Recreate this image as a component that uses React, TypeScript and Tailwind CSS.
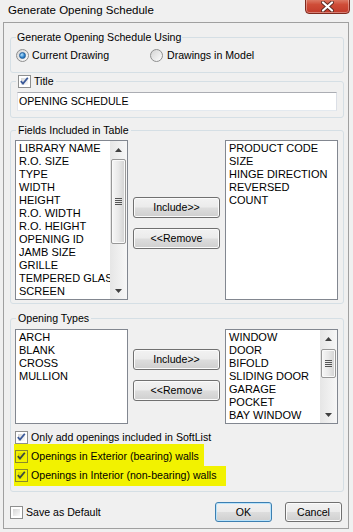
import React from "react";

function Check({ checked, hl }: { checked?: boolean; hl?: boolean }) {
  return (
    <span
      className={`relative flex w-[13px] h-[13px] shrink-0 border ${hl ? "border-[#8a8a2a] bg-[#f2f200]" : "border-[#8e8f8f] bg-white"} p-[2px]`}
    >
      <span
        className={`block w-full h-full ${hl ? "bg-linear-to-br from-[#d8d800] to-[#f2f200]" : "bg-linear-to-br from-[#d6d6d6] to-[#fbfbfb]"}`}
      />
      {checked && (
        <svg className="absolute left-0 top-0" width="11" height="11" viewBox="0 0 11 11">
          <polyline points="1.8,5.2 4,7.6 8.8,1.8" fill="none" stroke={hl ? "#3a4a40" : "#3b5a9a"} strokeWidth="1.8" />
        </svg>
      )}
    </span>
  );
}

function Radio({ on }: { on?: boolean }) {
  return (
    <span className="flex items-center justify-center w-[13px] h-[13px] shrink-0 rounded-full border border-[#8e8f8f] bg-linear-to-br from-[#d4d4d4] to-[#fdfdfd]">
      {on && (
        <span className="block w-[7px] h-[7px] rounded-full bg-[radial-gradient(circle_at_35%_35%,#b8e4ff,#2a7fc8_60%,#1a5a98)] border border-[#23609c]" />
      )}
    </span>
  );
}

function Btn({ children, cls, def }: { children: React.ReactNode; cls: string; def?: boolean }) {
  return (
    <div
      className={`flex shrink-0 items-center justify-center rounded-[3px] border ${def ? "border-[#3c7fb1] shadow-[inset_0_0_0_1px_#b9e3fb]" : "border-[#707070] shadow-[inset_0_0_0_1px_#fbfbfb]"} bg-[linear-gradient(#f2f2f2_0%,#ebebeb_48%,#dddddd_52%,#cfcfcf_100%)] ${cls}`}
    >
      {children}
    </div>
  );
}

function ScrollBar({ thumbTop, thumbH }: { thumbTop: number; thumbH: number }) {
  return (
    <div className="relative w-[17px] h-full shrink-0 bg-linear-to-r from-[#e6e6e6] to-[#f7f7f7]">
      <div className="absolute left-0 top-0 w-[17px] h-[17px] flex items-center justify-center">
        <svg width="7" height="4" viewBox="0 0 7 4">
          <polygon points="3.5,0 7,4 0,4" fill="#404040" />
        </svg>
      </div>
      <div
        className="absolute left-[1px] w-[15px] rounded-[2px] border border-[#979797] bg-linear-to-r from-[#f7f7f7] via-[#e8e8e8] to-[#d2d2d2] flex items-center justify-center shadow-[inset_0_0_0_1px_#f9f9f9]"
        style={{ top: thumbTop, height: thumbH }}
      >
        <svg width="7" height="7" viewBox="0 0 7 7">
          <line x1="0" y1="0.5" x2="7" y2="0.5" stroke="#555" />
          <line x1="0" y1="2.5" x2="7" y2="2.5" stroke="#555" />
          <line x1="0" y1="4.5" x2="7" y2="4.5" stroke="#555" />
          <line x1="0" y1="6.5" x2="7" y2="6.5" stroke="#555" />
        </svg>
      </div>
      <div className="absolute left-0 bottom-0 w-[17px] h-[17px] flex items-center justify-center">
        <svg width="7" height="4" viewBox="0 0 7 4">
          <polygon points="0,0 7,0 3.5,4" fill="#404040" />
        </svg>
      </div>
    </div>
  );
}

function ListBox({
  items,
  cls,
  scroll,
}: {
  items: string[];
  cls: string;
  scroll?: { top: number; h: number };
}) {
  return (
    <div className={`flex shrink-0 bg-white border border-[#828790] overflow-hidden ${cls}`}>
      <div className="flex-1 flex flex-col pl-[3px] pt-[1px] overflow-hidden whitespace-nowrap">
        {items.map((t) => (
          <div key={t} className="h-[13px] leading-[13px] text-[11px]">
            {t}
          </div>
        ))}
      </div>
      {scroll && <ScrollBar thumbTop={scroll.top} thumbH={scroll.h} />}
    </div>
  );
}

export default function App() {
  const fields = [
    "LIBRARY NAME",
    "R.O. SIZE",
    "TYPE",
    "WIDTH",
    "HEIGHT",
    "R.O. WIDTH",
    "R.O. HEIGHT",
    "OPENING ID",
    "JAMB SIZE",
    "GRILLE",
    "TEMPERED GLASS",
    "SCREEN",
  ];
  const chosen = ["PRODUCT CODE", "SIZE", "HINGE DIRECTION", "REVERSED", "COUNT"];
  const types = ["ARCH", "BLANK", "CROSS", "MULLION"];
  const chosenTypes = ["WINDOW", "DOOR", "BIFOLD", "SLIDING DOOR", "GARAGE", "POCKET", "BAY WINDOW"];

  return (
    <div className="w-[353px] h-[532px] bg-[#f0f0f0] flex flex-col font-['Liberation_Sans',Arial,sans-serif] text-[10.6px] leading-[13px] text-black overflow-hidden whitespace-nowrap">
      {/* title bar */}
      <div className="h-[22px] flex items-start shrink-0">
        <span className="ml-[8px] mt-[4px] text-[11.5px] leading-[13px]">Generate Opening Schedule</span>
        <div className="ml-auto mr-[3px] mt-[-5px] w-[45px] h-[19px] shrink-0 rounded-b-[4px] border border-[#7e2a1e] bg-linear-to-b from-[#e59a88] via-[#cf4d38] to-[#c23a2a] shadow-[inset_0_0_0_1px_rgba(255,255,255,0.35)] flex items-center justify-center">
          <svg width="13" height="11" viewBox="0 0 13 11" className="mt-[3px]">
            <path d="M2 1.5 L11 9.5 M11 1.5 L2 9.5" stroke="#5b2a22" strokeWidth="4" strokeLinecap="round" />
            <path d="M2 1.5 L11 9.5 M11 1.5 L2 9.5" stroke="#ffffff" strokeWidth="2.2" strokeLinecap="round" />
          </svg>
        </div>
      </div>

      {/* client area */}
      <div className="ml-[3px] w-[346px] h-[507px] border border-[#a0a0a0] flex flex-col shrink-0">
        {/* group 1 */}
        <fieldset className="ml-[6px] mt-[8px] w-[334px] h-[42px] border border-[#d5dfe5] rounded-[3px] pl-[5px] shrink-0">
          <legend className="px-[1px] leading-[13px]">Generate Opening Schedule Using</legend>
          <div className="flex items-center h-[13px] mt-[5px]">
            <div className="flex items-center gap-[3px] w-[134px]">
              <Radio on />
              <span>Current Drawing</span>
            </div>
            <div className="flex items-center gap-[4px]">
              <Radio />
              <span>Drawings in Model</span>
            </div>
          </div>
        </fieldset>

        {/* group 2 */}
        <fieldset className="ml-[6px] mt-[2px] w-[334px] h-[43px] border border-[#d5dfe5] rounded-[3px] pl-[5px] shrink-0">
          <legend className="px-[2px]">
            <span className="flex items-center gap-[3px] h-[13px]">
              <Check checked />
              <span>Title</span>
            </span>
          </legend>
          <div className="ml-[1px] mt-[4px] w-[320px] h-[19px] bg-white border border-[#abadb3] border-l-[#e2e3ea] border-r-[#dbdfe6] border-b-[#e3e9ef] pl-[1px] flex items-center">
            OPENING SCHEDULE
          </div>
        </fieldset>

        {/* group 3 */}
        <fieldset className="ml-[6px] mt-[6px] w-[334px] h-[180px] border border-[#d5dfe5] rounded-[3px] pl-[4px] shrink-0">
          <legend className="ml-[1px] px-[2px]">Fields Included in Table</legend>
          <div className="flex mt-[3px]">
            <ListBox items={fields} cls="w-[113px] h-[160px]" scroll={{ top: 18, h: 85 }} />
            <div className="ml-[5px] w-[87px] pt-[57px] flex flex-col gap-[10px]">
              <Btn cls="h-[21px] w-[87px]">Include&gt;&gt;</Btn>
              <Btn cls="h-[21px] w-[87px]">&lt;&lt;Remove</Btn>
            </div>
            <ListBox items={chosen} cls="ml-[5px] w-[113px] h-[160px]" />
          </div>
        </fieldset>

        {/* group 4 */}
        <fieldset className="ml-[6px] mt-[8px] w-[334px] h-[180px] border border-[#d5dfe5] rounded-[3px] pl-[4px] shrink-0">
          <legend className="ml-[1px] px-[2px]">Opening Types</legend>
          <div className="flex mt-[4px]">
            <ListBox items={types} cls="w-[113px] h-[95px]" />
            <div className="ml-[5px] w-[87px] pt-[20px] flex flex-col gap-[10px]">
              <Btn cls="h-[21px] w-[87px]">Include&gt;&gt;</Btn>
              <Btn cls="h-[21px] w-[87px]">&lt;&lt;Remove</Btn>
            </div>
            <ListBox items={chosenTypes} cls="ml-[5px] w-[113px] h-[95px]" scroll={{ top: 19, h: 29 }} />
          </div>
          <div className="mt-[7px] flex items-center gap-[3px] h-[13px]">
            <Check checked />
            <span>Only add openings included in SoftList</span>
          </div>
          <div className="ml-[-1px] pl-[1px] w-[190px] h-[22px] pt-[6px] bg-[#f2f200] flex items-start gap-[3px]">
            <Check checked hl />
            <span className="whitespace-nowrap">Openings in Exterior (bearing) walls</span>
          </div>
          <div className="ml-[-1px] pl-[1px] w-[212px] h-[20px] pt-[3px] bg-[#f2f200] flex items-start gap-[3px]">
            <Check checked hl />
            <span className="whitespace-nowrap">Openings in Interior (non-bearing) walls</span>
          </div>
        </fieldset>

        {/* bottom row */}
        <div className="mt-[10px] h-[20px] flex items-center ml-[6px] mr-[6px]">
          <Check />
          <span className="ml-[3px]">Save as Default</span>
          <Btn def cls="ml-auto w-[57px] h-[20px]">OK</Btn>
          <Btn cls="ml-[13px] w-[57px] h-[20px]">Cancel</Btn>
        </div>
      </div>
    </div>
  );
}
